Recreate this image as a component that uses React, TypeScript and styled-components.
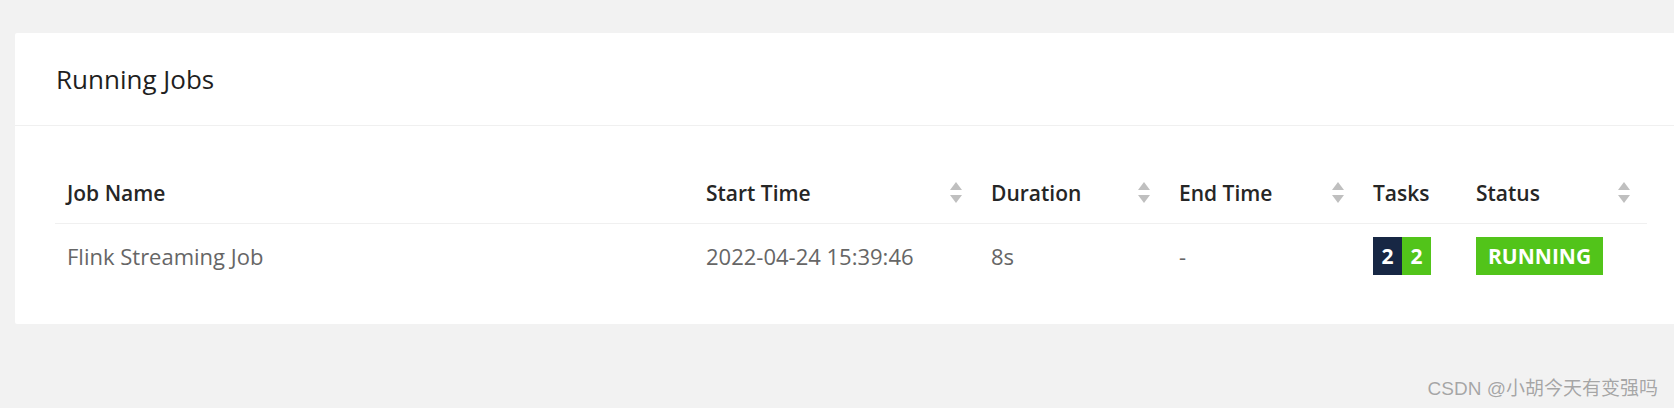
import React from 'react'
import styled, { createGlobalStyle } from 'styled-components'

const GlobalStyle = createGlobalStyle`
  html, body {
    margin: 0;
    padding: 0;
    background: #f2f2f2;
    font-family: 'Open Sans', 'Noto Sans', sans-serif;
  }
`

const UI = {
  Page: styled.div`
    position: relative;
    height: 408px;
    padding: 33px 0 0 15px;
    box-sizing: border-box;
    overflow: hidden;
  `,
  Card: styled.section`
    width: 1690px;
    background: #fff;
    border-radius: 2px;
  `,
  CardHead: styled.div`
    display: flex;
    align-items: center;
    height: 92px;
    padding: 0 0 0 41px;
    border-bottom: 1px solid #f0f0f0;
    font-size: 26px;
    font-weight: 500;
    color: #1f1f1f;
  `,
  CardBody: styled.div`
    padding: 37px 0 36px 40px;
  `,
  Table: styled.div`
    width: 1592px;
    display: grid;
    grid-template-columns: 639px 285px 188px 194px 103px 183px;
  `,
  HeadCell: styled.div`
    display: flex;
    align-items: center;
    justify-content: space-between;
    height: 60px;
    padding: 0 17px 0 12px;
    border-bottom: 1px solid #f0f0f0;
    font-size: 21px;
    font-weight: 600;
    color: #262626;
  `,
  Cell: styled.div`
    display: flex;
    align-items: center;
    height: 64px;
    padding: 0 12px;
    font-size: 22px;
    color: #666;
  `,
  Sorter: styled.svg`
    width: 12px;
    height: 22px;
    flex: none;
  `,
  TaskBadges: styled.div`
    display: flex;
  `,
  Count: styled.span<{ $bg: string }>`
    display: inline-flex;
    align-items: center;
    justify-content: center;
    width: 29px;
    height: 38px;
    background: ${({ $bg }) => $bg};
    color: #fff;
    font-size: 21px;
    font-weight: 700;
  `,
  Status: styled.span`
    display: inline-flex;
    align-items: center;
    height: 38px;
    padding: 0 12px;
    background: #52c41a;
    color: #fff;
    font-size: 21px;
    font-weight: 700;
  `,
  Watermark: styled.div`
    position: absolute;
    right: 16px;
    bottom: 8px;
    font-family: 'Liberation Sans', 'Noto Sans CJK SC', sans-serif;
    font-size: 19px;
    color: #a6a6a6;
    text-shadow: 0 0 1px #fff;
  `
}

const Sorter = () => (
  <UI.Sorter viewBox="0 0 12 22">
    <path d="M6 0 L12 8 L0 8 Z" fill="#bfbfbf" />
    <path d="M0 13 L12 13 L6 21 Z" fill="#bfbfbf" />
  </UI.Sorter>
)

const columns = [
  { title: 'Job Name', sort: false },
  { title: 'Start Time', sort: true },
  { title: 'Duration', sort: true },
  { title: 'End Time', sort: true },
  { title: 'Tasks', sort: false },
  { title: 'Status', sort: true }
]

export default function App () {
  return (
    <>
      <GlobalStyle />
      <UI.Page>
        <UI.Card>
          <UI.CardHead>Running Jobs</UI.CardHead>
          <UI.CardBody>
            <UI.Table>
              {columns.map(c => (
                <UI.HeadCell key={c.title}>
                  <span>{c.title}</span>
                  {c.sort && <Sorter />}
                </UI.HeadCell>
              ))}
              <UI.Cell>Flink Streaming Job</UI.Cell>
              <UI.Cell>2022-04-24 15:39:46</UI.Cell>
              <UI.Cell>8s</UI.Cell>
              <UI.Cell>-</UI.Cell>
              <UI.Cell>
                <UI.TaskBadges>
                  <UI.Count $bg="#172744">2</UI.Count>
                  <UI.Count $bg="#52c41a">2</UI.Count>
                </UI.TaskBadges>
              </UI.Cell>
              <UI.Cell>
                <UI.Status>RUNNING</UI.Status>
              </UI.Cell>
            </UI.Table>
          </UI.CardBody>
        </UI.Card>
        <UI.Watermark>CSDN @小胡今天有变强吗</UI.Watermark>
      </UI.Page>
    </>
  )
}
